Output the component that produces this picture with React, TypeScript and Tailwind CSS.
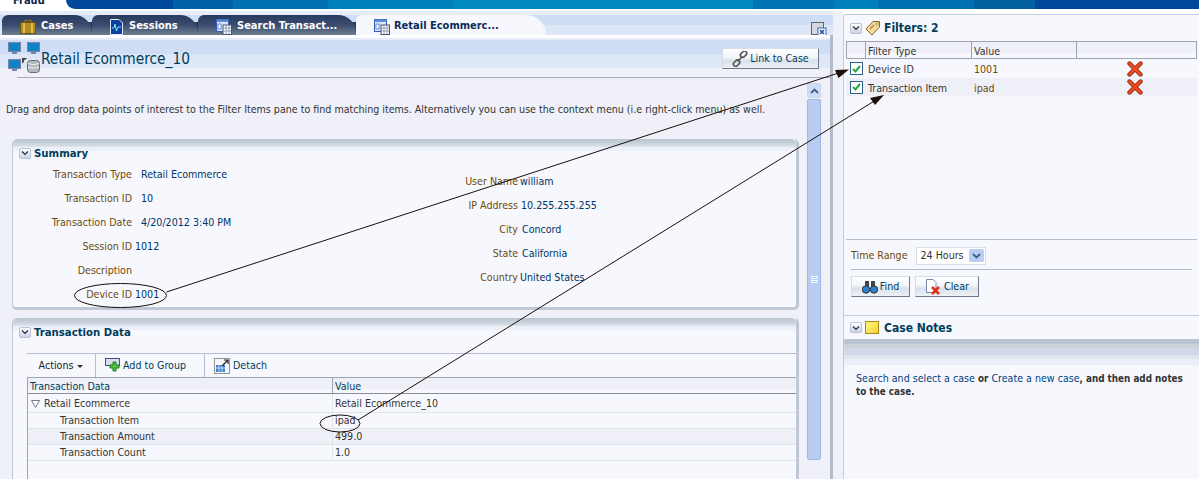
import type { ReactNode } from 'react';

const font = { fontFamily: '"DejaVu Sans Condensed", Tahoma, "DejaVu Sans", sans-serif' };

function Collapse() {
  return (
    <span className="flex h-[11px] w-[12px] shrink-0 items-center justify-center rounded-[2px] border border-[#b9c3d4] bg-[linear-gradient(#ffffff,#c9d3e3)]">
      <svg width="8" height="6" viewBox="0 0 8 6">
        <path d="M1 1.5 L4 4.5 L7 1.5" fill="none" stroke="#1d2b44" strokeWidth="1.2" />
      </svg>
    </span>
  );
}

function WindowIcon() {
  return (
    <svg width="16" height="16" viewBox="0 0 16 16" className="shrink-0">
      <rect x="0.5" y="0.5" width="12" height="12" fill="#dfe8fa" stroke="#2f5fb5" />
      <rect x="0.5" y="0.5" width="12" height="2.5" fill="#5c8ad8" />
      <rect x="2" y="5" width="3" height="5" fill="#fff" stroke="#2f5fb5" strokeWidth="0.7" />
      <rect x="7" y="6" width="8.5" height="9.5" fill="#fff" stroke="#44507a" />
      <path d="M7 9 H15 M7 12 H15 M10 6 V15 M13 6 V15" stroke="#7a86a8" strokeWidth="0.8" />
    </svg>
  );
}

function BriefcaseIcon() {
  return (
    <svg width="16" height="15" viewBox="0 0 16 15" className="shrink-0">
      <path d="M5 4 V1.5 H11 V4" fill="none" stroke="#8a6a14" strokeWidth="1.4" />
      <rect x="0.5" y="3.5" width="15" height="11" fill="#b08a22" stroke="#6e5510" />
      <rect x="3" y="4" width="2" height="10" fill="#e0bf4e" />
      <rect x="11" y="4" width="2" height="10" fill="#e0bf4e" />
    </svg>
  );
}

function SessionIcon() {
  return (
    <svg width="13" height="16" viewBox="0 0 13 16" className="shrink-0">
      <path d="M0.5 0.5 H9 L12.5 4 V15.5 H0.5 Z" fill="#0f3f9c" stroke="#dfe8fa" />
      <path d="M2 9 H4 L5 5 L6.5 12 L8 8 H11" fill="none" stroke="#7fe0f0" strokeWidth="1" />
    </svg>
  );
}

function Monitor() {
  return (
    <svg width="13" height="13" viewBox="0 0 13 13">
      <rect x="0.5" y="0.5" width="12" height="9" fill="#0f83c4" stroke="#7a84a8" />
      <rect x="4" y="10" width="5" height="2" fill="#7a84a8" />
    </svg>
  );
}

function TopologyIcon() {
  return (
    <div className="grid h-[32px] w-[33px] shrink-0 grid-cols-[13px_13px] gap-x-[6px] gap-y-[3px]">
      <Monitor />
      <Monitor />
      <Monitor />
      <svg width="19" height="15" viewBox="0 0 19 15" className="-ml-[6px] -mt-[1px]">
        <path d="M1 0 H6 L4 2 H3 V4 L1 5.5 Z" fill="#444" />
        <rect x="6.5" y="2.5" width="12" height="12" rx="3" fill="#b4b8c0" stroke="#555" strokeWidth="0.8" />
        <path d="M7 5.5 Q12.5 8 18 5.5 M7 9 Q12.5 11.5 18 9" fill="none" stroke="#fff" strokeWidth="0.8" />
      </svg>
    </div>
  );
}

function LinkIcon() {
  return (
    <svg width="16" height="16" viewBox="0 0 16 16" className="shrink-0">
      <g fill="none" stroke="#555" strokeWidth="1.6">
        <rect x="8" y="1" width="7" height="4.5" rx="2.2" transform="rotate(-45 11.5 3.2)" />
        <rect x="1" y="10" width="7" height="4.5" rx="2.2" transform="rotate(-45 4.5 12.2)" />
        <path d="M5.5 10.5 L10.5 5.5" />
      </g>
    </svg>
  );
}

function CheckBox() {
  return (
    <span className="flex h-[13px] w-[13px] items-center justify-center border border-[#2e5f86] bg-white">
      <svg width="9" height="8" viewBox="0 0 9 8">
        <path d="M1 4 L3.5 6.5 L8 1" fill="none" stroke="#28a745" strokeWidth="2" />
      </svg>
    </span>
  );
}

function RedX() {
  return (
    <svg width="16" height="16" viewBox="0 0 16 16">
      <path d="M2.5 2.5 L13.5 13.5 M13.5 2.5 L2.5 13.5" stroke="#8a2a10" strokeWidth="4.4" strokeLinecap="round" />
      <path d="M2.5 2.5 L13.5 13.5 M13.5 2.5 L2.5 13.5" stroke="#ee4a1e" strokeWidth="2.6" strokeLinecap="round" />
    </svg>
  );
}

function Button({ icon, label, className }: { icon: ReactNode; label: string; className: string }) {
  return (
    <div className={`flex items-center justify-center gap-[2px] border border-[#d5dde6] border-r-[#70788a] border-b-[#70788a] bg-[linear-gradient(#ffffff_0%,#f2f4f9_45%,#d8e2ea_60%,#eef1f7_100%)] text-[#003d5b] ${className}`}>
      {icon}
      <span>{label}</span>
    </div>
  );
}

function Panel({ title, className, children }: { title: string; className: string; children: ReactNode }) {
  return (
    <section className={`ml-[12px] w-[787px] rounded-t-[5px] border-l border-r-[3px] border-[#c0c8d6] bg-[#f7f8fe] ${className}`}>
      <div className="h-[8px] rounded-t-[5px] bg-[linear-gradient(#b9c4d0_0%,#c9d3dc_60%,#dfe6ec_100%)]" />
      <div className="h-[4px] bg-[#ecf0f8]" />
      <div className="mt-[-6px] flex h-[16px] items-center gap-[3px] pl-[6px] text-[11.3px] font-bold text-[#003d5b]">
        <Collapse />
        <span className="relative pt-[2px]">{title}</span>
      </div>
      {children}
    </section>
  );
}

function Field({ label, value, width, gap, valueClass = 'text-[#003366]' }: { label: string; value?: string; width: string; gap: string; valueClass?: string }) {
  return (
    <div className="flex h-[24px] items-center whitespace-nowrap">
      <span className={`text-right text-[#6b4a0a] ${width}`}>{label}</span>
      <span className={`${gap} ${valueClass}`}>{value}</span>
    </div>
  );
}

const tabs = [
  { label: 'Cases', icon: <BriefcaseIcon />, width: 'w-[90px]', gap: 'gap-[5px]' },
  { label: 'Sessions', icon: <SessionIcon />, width: 'w-[106px]', gap: 'gap-[6px]' },
  { label: 'Search Transact...', icon: <WindowIcon />, width: 'w-[158px]', gap: 'gap-[5px]' },
];

const leftFields = [
  { label: 'Transaction Type', value: 'Retail Ecommerce', gap: 'ml-[9px]' },
  { label: 'Transaction ID', value: '10', gap: 'ml-[9px]' },
  { label: 'Transaction Date', value: '4/20/2012 3:40 PM', gap: 'ml-[9px]' },
  { label: 'Session ID', value: '1012', gap: 'ml-[3px]' },
  { label: 'Description', value: '', gap: 'ml-[3px]' },
  { label: 'Device ID', value: '1001', gap: 'ml-[3px]' },
];

const rightFields = [
  { label: 'User Name', value: 'william', gap: 'ml-[2px]' },
  { label: 'IP Address', value: '10.255.255.255', gap: 'ml-[3px]' },
  { label: 'City', value: 'Concord', gap: 'ml-[4px]' },
  { label: 'State', value: 'California', gap: 'ml-[4px]' },
  { label: 'Country', value: 'United States', gap: 'ml-[2px]' },
];

const dataRows = [
  { label: 'Transaction Item', value: 'ipad', bg: '' },
  { label: 'Transaction Amount', value: '499.0', bg: 'bg-[#eff0f7]' },
  { label: 'Transaction Count', value: '1.0', bg: '' },
];

export default function App() {
  return (
    <div style={font} className="relative h-[479px] w-[1199px] overflow-hidden bg-white text-[10.6px] text-[#333]">
      {/* top strip */}
      <div className="flex h-[9px]">
        <div className="w-[66px] pl-[13px] text-[11px] font-bold leading-[2px] text-[#12284e]">Fraud</div>
        <div className="flex-1 rounded-bl-[10px] bg-[linear-gradient(90deg,#00489b_0,#00489b_107px,#0060a5_107px,#0060a5_167px,#0070b0_167px,#0070b0_262px,#0080ba_262px,#0080ba_387px,#0088bf_387px,#0088bf_687px,#0073b3_687px,#0073b3_769px,#0080ba_769px,#0080ba_812px,#0070b0_812px,#0070b0_908px,#0060a0_908px,#0060a0_969px,#00489b_969px)]" />
      </div>

      <div className="flex h-[470px] pt-[2px]">
        {/* left column */}
        <div className="flex w-[833px] shrink-0 flex-col">
          <div className="flex h-[24px] shrink-0 items-end bg-[linear-gradient(#e6ecf9_0,#e6ecf9_4px,#cfdef5_4px,#cfdef5_14px,#dde7f7_14px)] pl-[2px] pr-[6px]">
            <div className="flex h-[20px] bg-[linear-gradient(transparent_0,transparent_7px,#2b3a5c_7px)]">
              {tabs.map((t) => (
                <div key={t.label} className={`flex h-[20px] items-center rounded-tl-[6px] rounded-tr-[18px] bg-[linear-gradient(#293a61_0%,#3a4b6e_50%,#5d7087_85%,#6a7c90_100%)] pl-[18px] pt-[3px] text-[11px] font-bold text-white ${t.width} ${t.gap}`}>
                  {t.icon}
                  <span>{t.label}</span>
                </div>
              ))}
            </div>
            <div className="flex h-[20px] w-[190px] items-center gap-[4px] rounded-tl-[6px] rounded-tr-[22px] bg-[#f7f8fe] pl-[18px] pt-[3px] text-[11px] font-bold text-[#0a2a5a]">
              <WindowIcon />
              <span>Retail Ecommerc...</span>
            </div>
            <div className="mb-[-1px] ml-auto">
              <svg width="16" height="16" viewBox="0 0 16 16">
                <rect x="0.5" y="2.5" width="12" height="12" fill="#d4d8de" stroke="#666" />
                <rect x="7" y="8" width="8" height="8" fill="#fff" stroke="#3a6aa8" />
                <path d="M9 10 L13 14 M13 10 L9 14" stroke="#1a4f9c" strokeWidth="1.6" />
              </svg>
            </div>
          </div>

          <div className="flex min-h-0 flex-1 flex-col border-r-[3px] border-[#b4bbc8] bg-[#eff0f8]">
            <div className="h-[3px] shrink-0 bg-white" />
            {/* page header */}
            <div className="h-[39px] shrink-0 bg-[linear-gradient(#e6ecf9_0,#e6ecf9_2px,#cfdef5_2px,#cfdef5_16px,#dde7f7_16px,#dde7f7_30px,#eff0f8_30px)]">
              <div className="flex items-start pl-[8px] pr-[11px] pt-[4px]">
                <TopologyIcon />
                <h1 className="mt-[8px] text-[15.3px] leading-[18px] text-[#003d5b]">Retail Ecommerce_10</h1>
                <Button icon={<LinkIcon />} label="Link to Case" className="ml-auto mt-[6px] h-[21px] w-[97px]" />
              </div>
            </div>
            <div className="ml-[17px] h-px shrink-0 bg-[#a9acb8]" />

            <div className="flex min-h-0 flex-1">
              <div className="w-[807px] shrink-0">
                <p className="ml-[6px] mt-[25px] whitespace-nowrap leading-[13px] text-[#333]">
                  Drag and drop data points of interest to the Filter Items pane to find matching items. Alternatively you can use the context menu (i.e right-click menu) as well.
                </p>

                <Panel title="Summary" className="mt-[23px] h-[171px] rounded-b-[5px] border-b-[3px]">
                  <div className="flex">
                    <div className="mt-[2px] w-[450px] pl-[7px]">
                      {leftFields.map((f) => (
                        <Field key={f.label} label={f.label} value={f.value} gap={f.gap} width="w-[112px]" />
                      ))}
                    </div>
                    <div className="mt-[9px]">
                      {rightFields.map((f) => (
                        <Field key={f.label} label={f.label} value={f.value} gap={f.gap} width="w-[55px]" />
                      ))}
                    </div>
                  </div>
                </Panel>

                <Panel title="Transaction Data" className="mt-[8px] h-[170px]">
                  <div className="ml-[14px] mt-[13px] flex h-[24px] items-center border-t border-[#b9bdd4] text-[#003d5b]">
                    <div className="flex h-full w-[69px] items-center justify-center gap-[4px] border-r border-[#b9bdd4] text-[#222]">
                      Actions
                      <span className="mt-[2px] border-x-[3px] border-t-[3px] border-x-transparent border-t-[#333]" />
                    </div>
                    <div className="flex h-full w-[109px] items-center gap-[2px] border-r border-[#b9bdd4] pl-[9px]">
                      <svg width="16" height="15" viewBox="0 0 16 15">
                        <rect x="0.5" y="0.5" width="14" height="7" fill="#d8dcf0" stroke="#44507a" />
                        <path d="M8 4 H11 V7 H14 V10 H11 V13 H8 V10 H5 V7 H8 Z" fill="#4cc23a" stroke="#1e7a1e" />
                      </svg>
                      Add to Group
                    </div>
                    <div className="flex h-full items-center gap-[3px] pl-[9px]">
                      <svg width="16" height="16" viewBox="0 0 16 16">
                        <rect x="0.5" y="0.5" width="15" height="15" fill="none" stroke="#333" strokeDasharray="1 1" />
                        <rect x="2" y="7" width="9" height="7" fill="#3f7fd0" />
                        <path d="M2 10 H11 M5 7 V14 M8 7 V14" stroke="#fff" strokeWidth="0.7" />
                        <path d="M8 8 L14 2 M10 2 H14 V6" fill="none" stroke="#222" strokeWidth="1.2" />
                      </svg>
                      Detach
                    </div>
                  </div>
                  <div className="ml-[14px] h-[200px] border-l border-[#9fa3b0]">
                    <div className="flex h-[17px] items-center border-y border-t-[#9fa3b0] border-b-[#8a8e98] bg-[linear-gradient(#eff0f7_0,#eff0f7_11px,#f7f8fe_11px)] text-[#003d5b]">
                      <div className="flex h-full w-[305px] items-center border-r border-[#9fa3b0] pl-[2px] pt-[2px]">Transaction Data</div>
                      <div className="pl-[2px] pt-[2px]">Value</div>
                    </div>
                    <div className="flex h-[19px] items-center border-b border-[#dde6e6]">
                      <div className="flex h-full w-[305px] items-center gap-[4px] border-r border-[#dde6e6] pl-[3px] pt-[2px]">
                        <svg width="9" height="8" viewBox="0 0 9 8">
                          <path d="M0.5 0.5 H8.5 L4.5 7.5 Z" fill="#fff" stroke="#6f7b88" />
                        </svg>
                        Retail Ecommerce
                      </div>
                      <div className="pl-[2px] pt-[2px]">Retail Ecommerce_10</div>
                    </div>
                    {dataRows.map((r) => (
                      <div key={r.label} className={`flex h-[16px] items-center border-b border-[#dde6e6] ${r.bg}`}>
                        <div className="flex h-full w-[305px] items-center border-r border-[#dde6e6] pl-[32px] pt-[1px]">{r.label}</div>
                        <div className="pl-[2px] pt-[1px]">{r.value}</div>
                      </div>
                    ))}
                  </div>
                </Panel>
              </div>

              {/* scrollbar */}
              <div className="mt-[5px] flex w-[14px] shrink-0 flex-col">
                <div className="flex h-[15px] items-center justify-center rounded-[2px] border border-[#c8d8f4] bg-[#cfdcf6]">
                  <svg width="9" height="6" viewBox="0 0 9 6">
                    <path d="M1 5 L4.5 1.5 L8 5" fill="none" stroke="#3f5f8a" strokeWidth="1.8" />
                  </svg>
                </div>
                <div className="mt-[1px] flex h-[361px] flex-col items-center justify-center gap-[1px] rounded-[2px] border border-[#9db6e8] bg-[#b9cdf3]">
                  <span className="h-px w-[7px] bg-white" />
                  <span className="h-px w-[7px] bg-white" />
                  <span className="h-px w-[7px] bg-white" />
                  <span className="h-px w-[7px] bg-white" />
                </div>
              </div>
            </div>
          </div>
        </div>

        {/* right column */}
        <div className="w-[10px] shrink-0 bg-[#eff1f8]" />
        <aside className="mt-[3px] flex min-w-0 flex-1 flex-col rounded-tl-[4px] border-l border-t border-[#c5cad8] bg-[#f7f8fe]">
          <div className="flex h-[26px] shrink-0 items-center gap-[3px] pl-[6px] text-[12px] font-bold text-[#003d5b]">
            <Collapse />
            <svg width="16" height="16" viewBox="0 0 16 16">
              <path d="M1 9 L8 1.5 L14.5 1.5 L14.5 7 L7 15 Z" fill="#f2dc9a" stroke="#8a6a20" />
              <circle cx="12" cy="4" r="1.2" fill="#fff" stroke="#8a6a20" strokeWidth="0.6" />
              <path d="M5 9 L9 5" stroke="#d07a5a" strokeWidth="1.6" />
            </svg>
            <span>Filters: 2</span>
          </div>

          <div className="mx-[2px] h-[198px] shrink-0">
            <div className="flex h-[18px] border border-[#9fa3b0] bg-[linear-gradient(#eff0f7_0,#eff0f7_11px,#f7f8fe_11px)] text-[#333]">
              <div className="w-[19px] border-r border-[#9fa3b0]" />
              <div className="flex w-[106px] items-center border-r border-[#9fa3b0] pl-[2px] pt-[3px]">Filter Type</div>
              <div className="flex w-[105px] items-center border-r border-[#9fa3b0] pl-[2px] pt-[3px]">Value</div>
            </div>
            <div className="flex h-[19px] items-center">
              <div className="flex w-[20px] justify-center"><CheckBox /></div>
              <div className="w-[105px] pl-[2px] pt-[3px]">Device ID</div>
              <div className="w-[105px] pl-[3px] pt-[3px] text-[#6b4a0a]">1001</div>
              <div className="flex w-[118px] justify-center"><RedX /></div>
            </div>
            <div className="flex h-[18px] items-center bg-[#eff0f7]">
              <div className="flex w-[20px] justify-center"><CheckBox /></div>
              <div className="w-[105px] pl-[2px] pt-[3px]">Transaction Item</div>
              <div className="w-[105px] pl-[3px] pt-[3px] text-[#6b4a0a]">ipad</div>
              <div className="flex w-[118px] justify-center"><RedX /></div>
            </div>
          </div>

          <div className="mx-[2px] h-px shrink-0 bg-[#b5b9c8]" />
          <div className="flex h-[29px] shrink-0 items-center pl-[7px] pt-[2px]">
            <span className="text-[#6b4a0a]">Time Range</span>
            <div className="ml-[8px] flex h-[18px] w-[70px] items-center justify-between border border-[#d5dde6] bg-white pl-[4px] pr-[1px]">
              <span>24 Hours</span>
              <span className="flex h-[13px] w-[15px] items-center justify-center rounded-[2px] bg-[#b9cdf3]">
                <svg width="9" height="6" viewBox="0 0 9 6">
                  <path d="M1 1 L4.5 4.5 L8 1" fill="none" stroke="#3f5f8a" strokeWidth="1.8" />
                </svg>
              </span>
            </div>
          </div>
          <div className="mx-[7px] h-px shrink-0 bg-[#b5b9c8]" />
          <div className="flex shrink-0 gap-[5px] pl-[7px] pt-[6px]">
            <Button
              label="Find"
              className="h-[21px] w-[59px]"
              icon={
                <svg width="16" height="14" viewBox="0 0 16 14">
                  <rect x="3" y="1" width="4" height="6" fill="#444" />
                  <rect x="9" y="1" width="4" height="6" fill="#444" />
                  <circle cx="4" cy="9.5" r="3.7" fill="#2a7fd0" stroke="#333" />
                  <circle cx="12" cy="9.5" r="3.7" fill="#2a7fd0" stroke="#333" />
                </svg>
              }
            />
            <Button
              label="Clear"
              className="h-[21px] w-[64px]"
              icon={
                <svg width="17" height="16" viewBox="0 0 17 16">
                  <path d="M1.5 0.5 H8 L11 3.5 V13.5 H1.5 Z" fill="#fff" stroke="#7c84b0" />
                  <path d="M7 8 L14 15 M14 8 L7 15" stroke="#d8341a" strokeWidth="2.6" />
                </svg>
              }
            />
          </div>
          <div className="mt-[18px] h-px shrink-0 bg-[#c5cad8]" />
          <div className="flex h-[23px] shrink-0 items-center gap-[3px] pl-[6px] text-[12px] font-bold text-[#003d5b]">
            <Collapse />
            <span className="h-[13px] w-[14px] border border-[#a88a1a] bg-[linear-gradient(135deg,#fff27a,#f5d638)]" />
            <span className="ml-[2px]">Case Notes</span>
          </div>
          <div className="h-[26px] shrink-0 bg-[linear-gradient(#b9c4d0_0,#b9c4d0_5px,#c9d3dc_5px,#c9d3dc_9px,#d0d8e8_9px,#d0d8e8_16px,#dfe6ec_16px,#dfe6ec_20px,#eaeefa_20px)]" />
          <p className="pl-[12px] pr-[8px] pt-[7px] text-[9.8px] font-bold leading-[13px] text-[#333]">
            <span className="text-[10.6px] font-normal text-[#003d80]">Search and select a case</span> or{' '}
            <span className="text-[10.6px] font-normal text-[#003d80]">Create a new case</span>, and then add notes to the case.
          </p>
        </aside>
      </div>

      {/* callout annotations drawn over the screenshot */}
      <svg width="1199" height="479" viewBox="0 0 1199 479" className="pointer-events-none absolute left-0 top-0">
        <g fill="none" stroke="#1a0f0a" strokeWidth="1">
          <ellipse cx="120.5" cy="295.5" rx="46" ry="12" />
          <ellipse cx="340" cy="423.5" rx="20" ry="8.5" />
          <path d="M166.5 292 L840 72.5" />
          <path d="M358 420 L876 100" />
        </g>
        <path d="M849 69.5 L835 70 L838.5 78 Z" fill="#1a0f0a" />
        <path d="M884 95 L870 98 L875 105 Z" fill="#1a0f0a" />
      </svg>
    </div>
  );
}
